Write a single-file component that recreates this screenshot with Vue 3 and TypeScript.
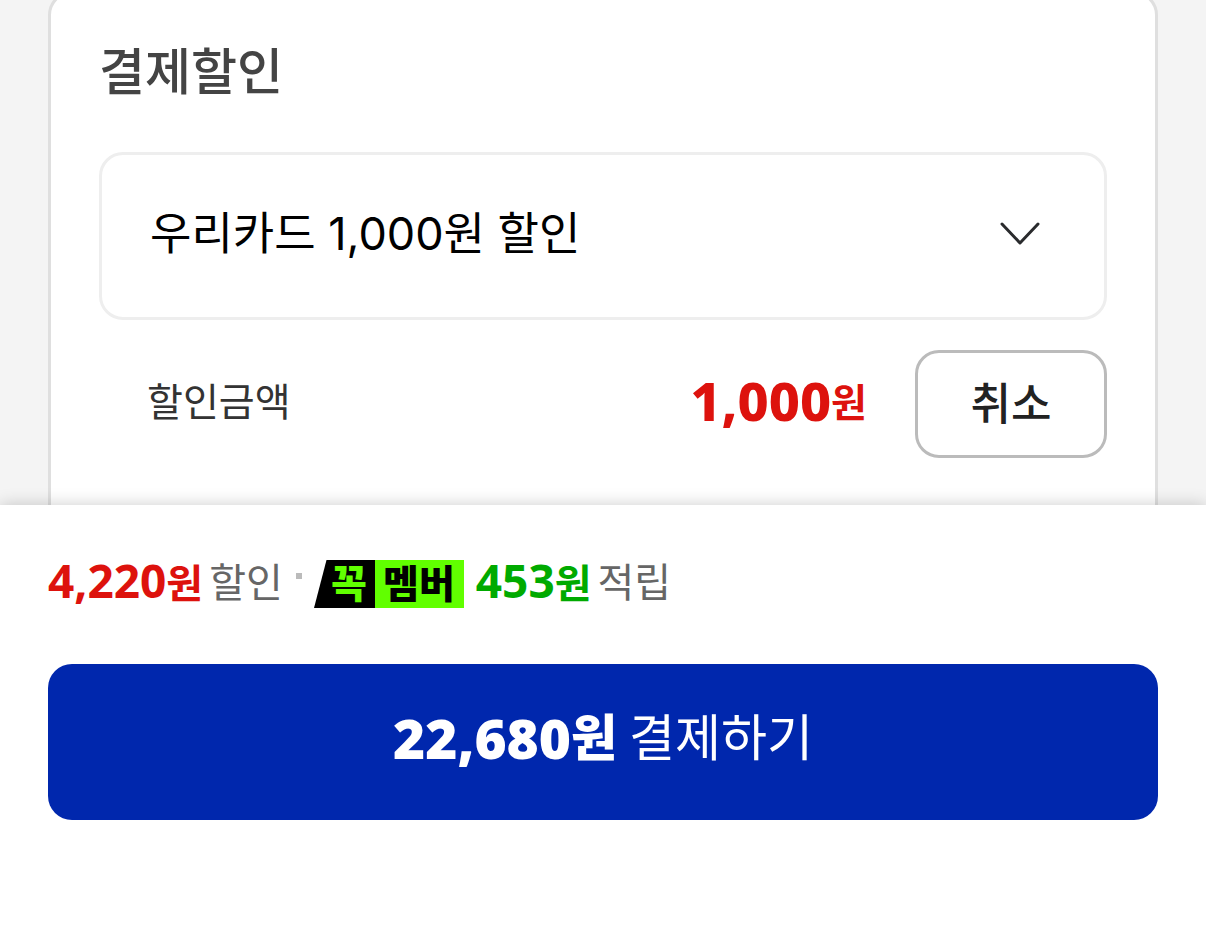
<script setup lang="ts">
import { ref } from 'vue'

interface CardOffer {
  id: string
  label: string
  amount: number
}

const offers: CardOffer[] = [{ id: 'woori', label: '우리카드 1,000원 할인', amount: 1000 }]
const selected = ref<string>('woori')
const discount = ref<number>(offers[0].amount)
const format = (value: number): string => value.toLocaleString('en-US')
const cancel = (): void => {
  discount.value = 0
}
</script>

<template>
  <div class="page">
    <main class="content">
      <section class="card" aria-labelledby="discount-title">
        <h2 id="discount-title" class="title">결제할인</h2>
        <div class="picker">
          <select v-model="selected" class="select" aria-labelledby="discount-title">
            <option v-for="offer in offers" :key="offer.id" :value="offer.id">{{ offer.label }}</option>
          </select>
          <svg class="chevron" viewBox="0 0 40 24" aria-hidden="true">
            <path d="M2 2 20 21 38 2" fill="none" stroke="#2a2b2d" stroke-width="3" stroke-linecap="round" stroke-linejoin="round" />
          </svg>
        </div>
        <div class="row">
          <span class="label">할인금액</span>
          <strong class="amount"><span class="amount-number">{{ format(discount) }}</span><span>원</span></strong>
          <button type="button" class="cancel" @click="cancel">취소</button>
        </div>
      </section>
    </main>

    <footer class="sheet">
      <p class="benefits">
        <strong class="benefit red"><span class="number">4,220</span>원</strong>
        <span class="caption">할인</span>
        <i class="dot"></i>
        <svg class="badge" viewBox="0 0 150 48" role="img" aria-label="꼭멤버">
          <path d="M12.500 0H61V48H0Z" fill="#000" />
          <path d="M61 0H150V48H61Z" fill="#61ff00" />
          <text class="badge-text" x="35" y="38" fill="#61ff00">꼭</text>
          <text class="badge-text" x="105" y="38" fill="#000">멤버</text>
        </svg>
        <strong class="benefit green"><span class="number">453</span>원</strong>
        <span class="caption">적립</span>
      </p>
      <button type="button" class="pay">
        <strong class="pay-amount"><span class="pay-number">22,680</span><span class="pay-text">원</span></strong>
        <span class="pay-text">결제하기</span>
      </button>
    </footer>
  </div>
</template>

<style>
body {
  margin: 0;
}
</style>

<style scoped>
.page {
  display: flex;
  flex-direction: column;
  height: 100vh;
  background: #f4f4f4;
  font-family: "Noto Sans CJK KR", sans-serif;
}

.content {
  display: flex;
  flex: 1;
  min-height: 0;
  overflow: hidden;
  padding: 0 48px;
}

.card {
  box-sizing: border-box;
  flex: 1;
  height: 640px;
  margin-top: -9px;
  padding: 44px 48px;
  border: 3px solid #dfdfdf;
  border-radius: 24px;
  background: #fff;
}

.title {
  margin: 0 0 54px;
  color: #444;
  font-size: 50px;
  font-weight: 500;
  line-height: 60px;
}

.picker {
  display: grid;
  align-items: center;
}

.select {
  grid-area: 1 / 1;
  appearance: none;
  width: 100%;
  height: 168px;
  margin: 0;
  padding: 0 120px 5px 48px;
  border: 3px solid #eee;
  border-radius: 24px;
  background: #fff;
  color: #000;
  font-family: "Inter", "Noto Sans CJK KR", sans-serif;
  font-size: 45px;
}

.chevron {
  grid-area: 1 / 1;
  justify-self: end;
  width: 40px;
  height: 24px;
  margin: 0 67px 5px 0;
  pointer-events: none;
}

.row {
  display: flex;
  align-items: center;
  margin-top: 30px;
  padding-left: 48px;
}

.label {
  flex: 1;
  padding-bottom: 10px;
  color: #333;
  font-size: 39px;
}

.amount {
  display: flex;
  align-items: center;
  padding-bottom: 8px;
  color: #dd120d;
  font-size: 39px;
  line-height: 72px;
}

.amount-number {
  font-family: "Noto Sans", sans-serif;
  font-size: 54px;
  font-weight: 800;
}

.cancel {
  width: 192px;
  height: 108px;
  margin-left: 48px;
  padding: 0 0 6px;
  border: 3px solid #bbb;
  border-radius: 24px;
  background: #fff;
  color: #222;
  font-family: inherit;
  font-size: 44px;
  font-weight: 500;
}

.sheet {
  position: relative;
  box-sizing: border-box;
  height: 441px;
  padding: 45px 48px;
  background: #fff;
  box-shadow: 0 0 16px rgba(0, 0, 0, 0.2);
}

.benefits {
  display: flex;
  align-items: center;
  height: 60px;
  margin: 0 0 54px;
}

.benefit {
  display: flex;
  align-items: baseline;
  font-size: 40px;
  line-height: 60px;
}

.number {
  font-family: "Noto Sans", sans-serif;
  font-size: 46px;
}

.red {
  color: #dd120d;
}

.green {
  color: #0a0;
}

.caption {
  margin-left: 6px;
  color: #666;
  font-size: 40px;
  line-height: 60px;
}

.dot {
  width: 6px;
  height: 6px;
  margin: 0 12px 8px 13px;
  background: #bbb;
}

.badge {
  width: 150px;
  height: 48px;
  margin: 8px 12px 0 0;
  overflow: visible;
}

.badge-text {
  font-size: 39px;
  font-weight: 900;
  text-anchor: middle;
}

.pay {
  display: flex;
  align-items: center;
  justify-content: center;
  gap: 12px;
  width: 100%;
  height: 156px;
  padding: 0 0 8px;
  border: 0;
  border-radius: 24px;
  background: #0027ad;
  color: #fff;
  font-family: inherit;
  font-size: 50px;
  line-height: 72px;
}

.pay-amount {
  display: flex;
  align-items: center;
  font-weight: 900;
}

.pay-number {
  font-family: "Noto Sans", sans-serif;
  font-size: 55px;
}

.pay-text {
  padding-bottom: 8px;
}
</style>
